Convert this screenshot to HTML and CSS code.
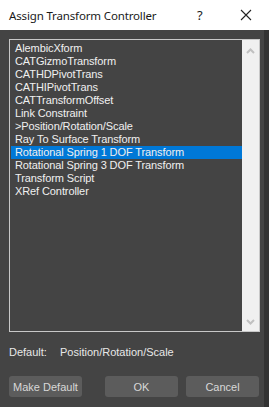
FILE: index.html
```html
<!DOCTYPE html>
<html lang="en">
<head>
  <meta charset="UTF-8">
  <title>Assign Transform Controller</title>
  <link rel="stylesheet" href="styles.css">
</head>
<body>
  <div class="dialog">
    <!-- title bar -->
    <div class="titlebar">
      <span class="title">Assign Transform Controller</span>
      <span class="help">?</span>
      <span class="close">
        <svg width="12" height="12" viewBox="0 0 12 12"><path d="M1 1 L11 11 M11 1 L1 11" stroke="#222" stroke-width="1.1" fill="none"/></svg>
      </span>
    </div>

    <div class="body">
      <div class="listbox">
        <ul class="items">
          <li>AlembicXform</li>
          <li>CATGizmoTransform</li>
          <li>CATHDPivotTrans</li>
          <li>CATHIPivotTrans</li>
          <li>CATTransformOffset</li>
          <li>Link Constraint</li>
          <li>&gt;Position/Rotation/Scale</li>
          <li>Ray To Surface Transform</li>
          <li class="selected">Rotational Spring 1 DOF Transform</li>
          <li>Rotational Spring 3 DOF Transform</li>
          <li>Transform Script</li>
          <li>XRef Controller</li>
        </ul>
        <div class="scrollbar">
          <svg class="arrow" width="9" height="6" viewBox="0 0 9 6"><path d="M1 5 L4.5 1.5 L8 5" stroke="#c0c0c0" stroke-width="2" fill="none"/></svg>
          <svg class="arrow" width="9" height="6" viewBox="0 0 9 6"><path d="M1 1 L4.5 4.5 L8 1" stroke="#c0c0c0" stroke-width="2" fill="none"/></svg>
        </div>
      </div>

      <div class="default-row">
        <span class="label">Default:</span>
        <span class="value">Position/Rotation/Scale</span>
      </div>

      <div class="buttons">
        <button class="btn make-default">Make Default</button>
        <button class="btn">OK</button>
        <button class="btn">Cancel</button>
      </div>
    </div>
  </div>
</body>
</html>
```

FILE: styles.css
```css
body {
  margin: 0;
  width: 269px;
  height: 407px;
  overflow: hidden;
  background: #444444;
  font-family: "Liberation Sans", Arial, sans-serif;
}

.dialog {
  height: 407px;
  display: flex;
  flex-direction: column;
  border-right: 5px solid #333333;
  box-sizing: border-box;
}

.titlebar {
  height: 30px;
  background: #ffffff;
  display: flex;
  align-items: center;
  padding: 0 17px 0 9px;
  margin-right: -5px;
  font-family: "Noto Sans", sans-serif;
  font-size: 11.5px;
  letter-spacing: -0.15px;
  color: #1a1a1a;
}

.title {
  flex: 1;
}

.help {
  width: 6px;
  margin-right: 37px;
  font-size: 13px;
}

.close {
  width: 12px;
  display: flex;
}

.body {
  flex: 1;
  padding: 9px 4px 0 9px;
  display: flex;
  flex-direction: column;
}

.listbox {
  height: 293px;
  border: 1px solid #c8c8c8;
  display: flex;
  box-sizing: border-box;
}

.items {
  flex: 1;
  list-style: none;
  margin: 0;
  padding: 2px 0 0 1px;
  font-size: 11px;
  letter-spacing: -0.1px;
  color: #f0f0f0;
}

.items li {
  height: 13px;
  line-height: 13px;
  padding-left: 4px;
  white-space: nowrap;
}

.items li.selected {
  background: #0078d7;
}

.scrollbar {
  width: 17px;
  background: #f0f0f0;
  display: flex;
  flex-direction: column;
  justify-content: space-between;
  align-items: center;
  padding: 8px 0 6px;
  box-sizing: border-box;
}

.default-row {
  margin-top: 14px;
  font-size: 11px;
  color: #e8e8e8;
  display: flex;
}

.label {
  width: 51px;
}

.buttons {
  margin-top: 18px;
  display: flex;
  gap: 8px;
}

.btn {
  width: 73px;
  height: 21px;
  border: none;
  border-radius: 3px;
  background: #5c5c5c;
  color: #d8d8d8;
  font-family: "Liberation Sans", Arial, sans-serif;
  font-size: 11px;
  padding: 0;
}

.make-default {
  margin-right: 15px;
}
```
